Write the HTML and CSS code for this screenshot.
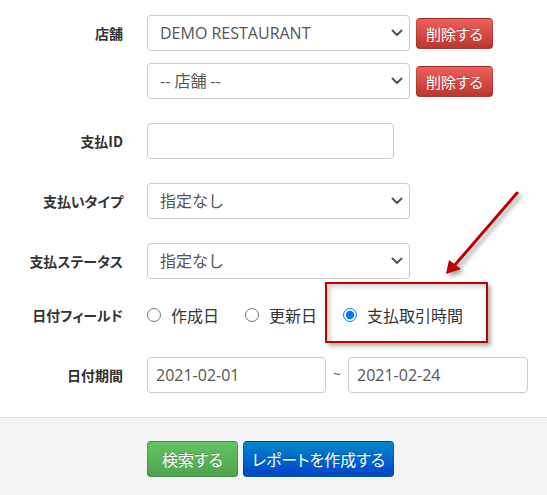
FILE: index.html
```html
<!DOCTYPE html>
<html lang="ja">
<head>
<meta charset="utf-8">
<title>検索</title>
<link rel="stylesheet" href="styles.css">
</head>
<body>
<div class="page">
  <form class="form">
    <div class="row">
      <label class="lbl">店舗</label>
      <div class="stack">
        <div class="line">
          <div class="sel w263">
            <select><option>DEMO RESTAURANT</option></select>
            <svg class="chev" viewBox="0 0 12 8" width="12" height="8"><polyline points="1.5,1.5 6,6 10.5,1.5"/></svg>
          </div>
          <button type="button" class="btn danger">削除する</button>
        </div>
        <div class="line">
          <div class="sel w263">
            <select><option>-- 店舗 --</option></select>
            <svg class="chev" viewBox="0 0 12 8" width="12" height="8"><polyline points="1.5,1.5 6,6 10.5,1.5"/></svg>
          </div>
          <button type="button" class="btn danger">削除する</button>
        </div>
      </div>
    </div>
    <div class="row">
      <label class="lbl">支払ID</label>
      <input class="txt w247" type="text">
    </div>
    <div class="row">
      <label class="lbl">支払いタイプ</label>
      <div class="sel w263">
        <select><option>指定なし</option></select>
        <svg class="chev" viewBox="0 0 12 8" width="12" height="8"><polyline points="1.5,1.5 6,6 10.5,1.5"/></svg>
      </div>
    </div>
    <div class="row">
      <label class="lbl">支払ステータス</label>
      <div class="sel w263">
        <select><option>指定なし</option></select>
        <svg class="chev" viewBox="0 0 12 8" width="12" height="8"><polyline points="1.5,1.5 6,6 10.5,1.5"/></svg>
      </div>
    </div>
    <div class="row radio-row">
      <label class="lbl">日付フィールド</label>
      <div class="radios">
        <label class="opt"><input type="radio" name="df">作成日</label>
        <label class="opt"><input type="radio" name="df">更新日</label>
        <label class="opt"><input type="radio" name="df" checked>支払取引時間</label>
      </div>
    </div>
    <div class="row">
      <label class="lbl">日付期間</label>
      <div class="range">
        <input class="txt date w179" type="text" value="2021-02-01">
        <span class="tilde">~</span>
        <input class="txt date w180" type="text" value="2021-02-24">
      </div>
    </div>
  </form>
  <div class="footer">
    <button type="button" class="btn big success">検索する</button>
    <button type="button" class="btn big primary">レポートを作成する</button>
  </div>

  <div class="callout"></div>
  <svg class="arrow" viewBox="0 0 100 105" width="100" height="105">
    <line x1="87" y1="13" x2="24" y2="86" />
    <polygon points="16,94 19,80 31,89" />
  </svg>
</div>
</body>
</html>
```

FILE: styles.css
```css
* { box-sizing: border-box; }
html, body { margin: 0; padding: 0; background: #fff; }
body {
  font-family: "Open Sans", "Noto Sans CJK JP", sans-serif;
  color: #333;
}
.page {
  position: relative;
  width: 547px;
  height: 495px;
  overflow: hidden;
}
.form {
  display: flex;
  flex-direction: column;
  gap: 24px;
  padding-top: 15px;
}
.row {
  display: grid;
  grid-template-columns: 123px 1fr;
  column-gap: 24px;
  align-items: start;
}
.lbl {
  text-align: right;
  font-family: "Noto Sans CJK JP", sans-serif;
  font-weight: 700;
  font-size: 14px;
  line-height: 36px;
  color: #333;
  font-feature-settings: "palt";
  white-space: nowrap;
}
.stack { display: flex; flex-direction: column; gap: 12px; }
.line { display: flex; align-items: center; gap: 6px; }
.sel { position: relative; height: 36px; }
.w263 { width: 263px; }
.w247 { width: 247px; }
.w179 { width: 179px; }
.w180 { width: 180px; }
.sel select {
  appearance: none;
  -webkit-appearance: none;
  width: 100%;
  height: 36px;
  border: 1px solid #ccc;
  border-radius: 4px;
  background: #fff;
  padding: 0 30px 0 12px;
  font-family: "Open Sans", "Noto Sans CJK JP", sans-serif;
  font-size: 16px;
  color: #555;
  outline: none;
}
.chev {
  position: absolute;
  right: 7px;
  top: 14px;
  fill: none;
  stroke: #555;
  stroke-width: 2;
  stroke-linecap: round;
  stroke-linejoin: round;
}
.txt {
  height: 36px;
  border: 1px solid #ccc;
  border-radius: 4px;
  background: #fff;
  padding: 0 12px;
  font-family: "Open Sans", "Noto Sans CJK JP", sans-serif;
  font-size: 16px;
  color: #555;
  outline: none;
}
.txt.date { padding: 0 8px; }
.range { display: flex; align-items: center; }
.tilde {
  width: 22px;
  text-align: center;
  font-size: 14px;
  color: #555;
  margin-top: -4px;
}
.radio-row { height: 30px; }
.radio-row .lbl { line-height: 24px; }
.radios {
  display: flex;
  align-items: center;
  gap: 26px;
  height: 24px;
}
.opt {
  display: flex;
  align-items: center;
  font-family: "Noto Sans CJK JP", sans-serif;
  font-size: 16px;
  color: #333;
  line-height: 24px;
}
.opt input {
  width: 14px;
  height: 14px;
  margin: 0 10px 0 0;
  accent-color: #0075ff;
}
.btn {
  font-family: "Noto Sans CJK JP", sans-serif;
  font-feature-settings: "palt";
  color: #fff;
  border-radius: 4px;
  border: 1px solid rgba(0,0,0,0.15);
  border-bottom-color: rgba(0,0,0,0.3);
  text-shadow: 0 -1px 0 rgba(0,0,0,0.2);
  cursor: pointer;
  padding: 0;
  white-space: nowrap;
}
.danger {
  width: 77px;
  height: 31px;
  font-size: 15px;
  background: linear-gradient(#ee5f5b, #bd362f);
}
.footer {
  margin-top: 24px;
  border-top: 1px solid #e3e3e3;
  background: #f4f4f4;
  height: 100px;
  padding: 23px 0 0 147px;
  display: flex;
  gap: 5px;
  align-items: flex-start;
}
.big {
  height: 36px;
  font-size: 16px;
}
.success { width: 91px; background: linear-gradient(#62c462, #51a351); }
.primary { width: 151px; background: linear-gradient(#0088cc, #0044cc); }
.callout {
  position: absolute;
  left: 325px;
  top: 282px;
  width: 163px;
  height: 61px;
  border: 2px solid #c00000;
  box-shadow: 3px 3px 4px rgba(0,0,0,0.3), inset 3px 3px 4px rgba(0,0,0,0.18);
  pointer-events: none;
}
.arrow {
  position: absolute;
  left: 430px;
  top: 180px;
  overflow: visible;
  filter: drop-shadow(3px 3px 2px rgba(0,0,0,0.35));
}
.arrow line { stroke: #c00000; stroke-width: 3; stroke-linecap: round; }
.arrow polygon { fill: #c00000; }
```
